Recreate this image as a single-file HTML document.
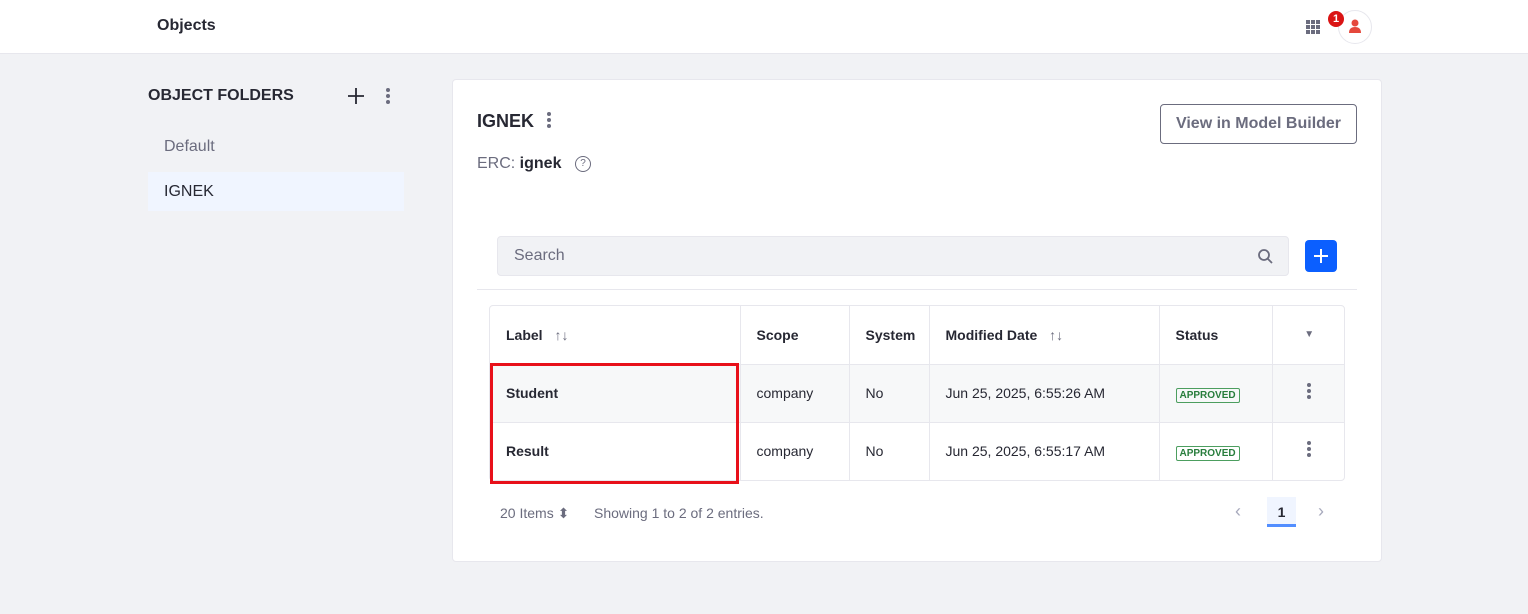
<!DOCTYPE html><html><head><style>
*{box-sizing:border-box;margin:0;padding:0}
body{width:1528px;height:614px;background:#f1f2f5;font-family:"Liberation Sans",sans-serif;color:#272833;position:relative;overflow:hidden}
.abs{position:absolute}
.top{left:0;top:0;width:1528px;height:54px;background:#fff;border-bottom:1px solid #e7e7ed}
.card{left:452px;top:79px;width:930px;height:483px;background:#fff;border:1px solid #e7e7ed;border-radius:4px}
.dots{display:inline-block;width:4px}
.dots i{display:block;width:4px;height:4px;border-radius:2px;background:#6b6c7e;margin-bottom:2px}
table{border-collapse:collapse;font-size:14px;table-layout:fixed}
td,th{border-right:1px solid #e7e7ed;border-bottom:1px solid #e7e7ed;text-align:left;padding:0 16px;white-space:nowrap;overflow:hidden}
th{height:58px;font-weight:bold}
td{height:58px;color:#272833}
.badge{border:1px solid #4c9e5f;color:#287d3c;font-size:10px;font-weight:bold;padding:1px 3px;border-radius:2px}
</style></head><body>
<div class="abs top"></div>
<div class="abs" style="left:157px;top:17px;font-weight:bold;font-size:16px">Objects</div>
<svg class="abs" style="left:1305px;top:19px" width="16" height="16"><g fill="#6b6c7e"><rect x="1" y="1" width="4" height="4"/><rect x="6" y="1" width="4" height="4"/><rect x="11" y="1" width="4" height="4"/><rect x="1" y="6" width="4" height="4"/><rect x="6" y="6" width="4" height="4"/><rect x="11" y="6" width="4" height="4"/><rect x="1" y="11" width="4" height="4"/><rect x="6" y="11" width="4" height="4"/><rect x="11" y="11" width="4" height="4"/></g></svg>
<div class="abs" style="left:1338px;top:10px;width:34px;height:34px;border-radius:17px;border:1px solid #e7e7ed;background:#fff"></div>
<svg class="abs" style="left:1347px;top:18px" width="16" height="16"><circle cx="8" cy="5" r="3.5" fill="#e5483c"/><path d="M2 15 Q2 9 8 9 Q14 9 14 15Z" fill="#e5483c"/></svg>
<div class="abs" style="left:1328px;top:11px;width:16px;height:16px;border-radius:8px;background:#da1414;color:#fff;font-size:11px;font-weight:bold;text-align:center;line-height:16px">1</div>

<div class="abs" style="left:148px;top:87px;font-weight:bold;font-size:16px">OBJECT FOLDERS</div>
<svg class="abs" style="left:347px;top:87px" width="18" height="18"><path d="M9 1V17M1 9H17" stroke="#272833" stroke-width="1.8"/></svg>
<div class="abs dots" style="left:386px;top:88px"><i></i><i></i><i></i></div>
<div class="abs" style="left:164px;top:138px;font-size:16px;color:#6b6c7e">Default</div>
<div class="abs" style="left:148px;top:172px;width:256px;height:39px;background:#f0f5ff"></div>
<div class="abs" style="left:164px;top:183px;font-size:16px;color:#272833">IGNEK</div>

<div class="abs card"></div>
<div class="abs" style="left:477px;top:111px;font-weight:bold;font-size:18px">IGNEK</div>
<div class="abs dots" style="left:547px;top:112px"><i></i><i></i><i></i></div>
<div class="abs" style="left:477px;top:155px;font-size:16px;color:#6b6c7e">ERC: <b style="color:#272833">ignek</b></div>
<div class="abs" style="left:575px;top:156px;width:16px;height:16px;border:1.5px solid #6b6c7e;border-radius:8px;font-size:10px;text-align:center;line-height:13px;color:#6b6c7e">?</div>
<div class="abs" style="left:1160px;top:104px;width:197px;height:40px;border:1px solid #6b6c7e;border-radius:4px;font-size:16px;font-weight:bold;color:#6b6c7e;text-align:center;line-height:38px">View in Model Builder</div>

<div class="abs" style="left:497px;top:236px;width:792px;height:40px;background:#f1f2f5;border:1px solid #e7e7ed;border-radius:4px"></div>
<div class="abs" style="left:514px;top:247px;font-size:16px;color:#6b6c7e">Search</div>
<svg class="abs" style="left:1257px;top:248px" width="16" height="16"><circle cx="7" cy="7" r="5" fill="none" stroke="#6b6c7e" stroke-width="1.8"/><path d="M11 11L15 15" stroke="#6b6c7e" stroke-width="1.8"/></svg>
<div class="abs" style="left:1305px;top:240px;width:32px;height:32px;background:#0b5fff;border-radius:4px"></div>
<svg class="abs" style="left:1313px;top:248px" width="16" height="16"><path d="M8 1V15M1 8H15" stroke="#fff" stroke-width="2"/></svg>
<div class="abs" style="left:477px;top:289px;width:880px;height:1px;background:#e7e7ed"></div>

<div class="abs" style="left:489px;top:305px;width:856px;height:176px;border:1px solid #e7e7ed;border-radius:4px;overflow:hidden">
<table style="width:856px">
<colgroup><col style="width:250px"><col style="width:109px"><col style="width:80px"><col style="width:230px"><col style="width:113px"><col style="width:74px"></colgroup>
<tr><th>Label <span style="color:#6b6c7e;font-weight:normal;margin-left:8px">↑↓</span></th><th>Scope</th><th>System</th><th>Modified Date <span style="color:#6b6c7e;font-weight:normal;margin-left:8px">↑↓</span></th><th>Status</th><th style="border-right:0;text-align:center;color:#6b6c7e;font-size:10px">▼</th></tr>
<tr style="background:#f7f8f9"><td><b>Student</b></td><td>company</td><td>No</td><td>Jun 25, 2025, 6:55:26 AM</td><td><span class="badge">APPROVED</span></td><td style="border-right:0;text-align:center"><span class="dots"><i></i><i></i><i></i></span></td></tr>
<tr><td><b>Result</b></td><td>company</td><td>No</td><td>Jun 25, 2025, 6:55:17 AM</td><td><span class="badge">APPROVED</span></td><td style="border-right:0;text-align:center"><span class="dots"><i></i><i></i><i></i></span></td></tr>
</table></div>
<div class="abs" style="left:490px;top:363px;width:249px;height:121px;border:3px solid #e8101a"></div>

<div class="abs" style="left:500px;top:505px;font-size:14px;color:#6b6c7e">20 Items ⬍</div>
<div class="abs" style="left:594px;top:505px;font-size:14px;color:#6b6c7e">Showing 1 to 2 of 2 entries.</div>
<div class="abs" style="left:1235px;top:501px;font-size:18px;color:#a7a9bc">‹</div>
<div class="abs" style="left:1267px;top:497px;width:29px;height:30px;background:#f0f5ff;border-bottom:3px solid #528eff;font-weight:bold;font-size:14px;text-align:center;line-height:30px">1</div>
<div class="abs" style="left:1318px;top:501px;font-size:18px;color:#a7a9bc">›</div>
</body></html>
